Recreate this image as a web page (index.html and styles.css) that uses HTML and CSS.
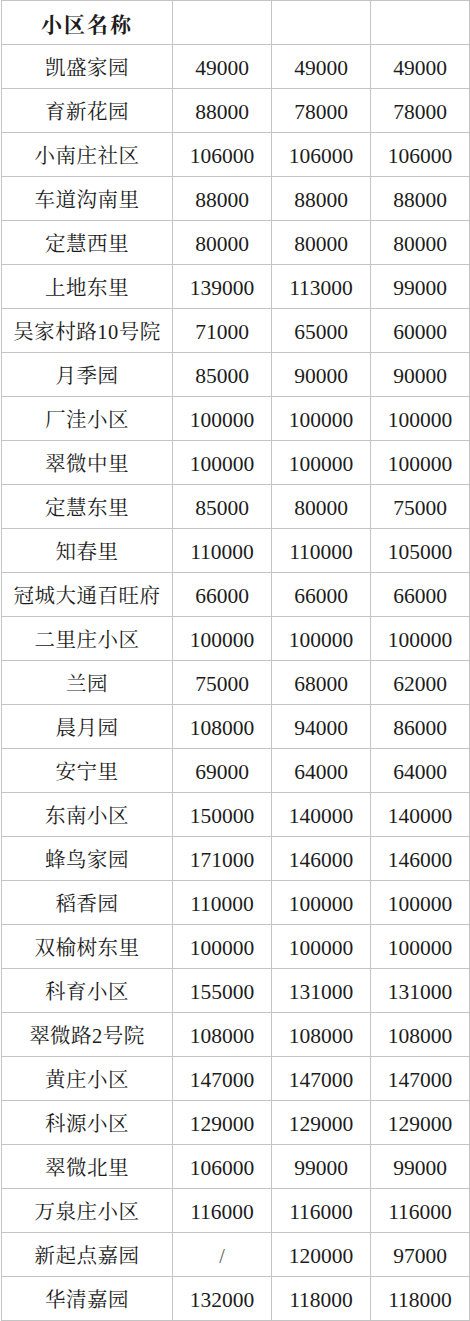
FILE: index.html
```html
<!DOCTYPE html>
<html lang="zh-CN">
<head>
<meta charset="utf-8">
<title>小区名称</title>
<link rel="stylesheet" href="styles.css">
</head>
<body>
<table class="price-table">
<colgroup>
<col class="c-name"><col class="c-num"><col class="c-num"><col class="c-num3">
</colgroup>
<tbody>
<tr class="head"><td class="name">小区名称</td><td></td><td></td><td></td></tr>
<tr><td class="name">凯盛家园</td><td>49000</td><td>49000</td><td>49000</td></tr>
<tr><td class="name">育新花园</td><td>88000</td><td>78000</td><td>78000</td></tr>
<tr><td class="name">小南庄社区</td><td>106000</td><td>106000</td><td>106000</td></tr>
<tr><td class="name">车道沟南里</td><td>88000</td><td>88000</td><td>88000</td></tr>
<tr><td class="name">定慧西里</td><td>80000</td><td>80000</td><td>80000</td></tr>
<tr><td class="name">上地东里</td><td>139000</td><td>113000</td><td>99000</td></tr>
<tr><td class="name">吴家村路10号院</td><td>71000</td><td>65000</td><td>60000</td></tr>
<tr><td class="name">月季园</td><td>85000</td><td>90000</td><td>90000</td></tr>
<tr><td class="name">厂洼小区</td><td>100000</td><td>100000</td><td>100000</td></tr>
<tr><td class="name">翠微中里</td><td>100000</td><td>100000</td><td>100000</td></tr>
<tr><td class="name">定慧东里</td><td>85000</td><td>80000</td><td>75000</td></tr>
<tr><td class="name">知春里</td><td>110000</td><td>110000</td><td>105000</td></tr>
<tr><td class="name">冠城大通百旺府</td><td>66000</td><td>66000</td><td>66000</td></tr>
<tr><td class="name">二里庄小区</td><td>100000</td><td>100000</td><td>100000</td></tr>
<tr><td class="name">兰园</td><td>75000</td><td>68000</td><td>62000</td></tr>
<tr><td class="name">晨月园</td><td>108000</td><td>94000</td><td>86000</td></tr>
<tr><td class="name">安宁里</td><td>69000</td><td>64000</td><td>64000</td></tr>
<tr><td class="name">东南小区</td><td>150000</td><td>140000</td><td>140000</td></tr>
<tr><td class="name">蜂鸟家园</td><td>171000</td><td>146000</td><td>146000</td></tr>
<tr><td class="name">稻香园</td><td>110000</td><td>100000</td><td>100000</td></tr>
<tr><td class="name">双榆树东里</td><td>100000</td><td>100000</td><td>100000</td></tr>
<tr><td class="name">科育小区</td><td>155000</td><td>131000</td><td>131000</td></tr>
<tr><td class="name">翠微路2号院</td><td>108000</td><td>108000</td><td>108000</td></tr>
<tr><td class="name">黄庄小区</td><td>147000</td><td>147000</td><td>147000</td></tr>
<tr><td class="name">科源小区</td><td>129000</td><td>129000</td><td>129000</td></tr>
<tr><td class="name">翠微北里</td><td>106000</td><td>99000</td><td>99000</td></tr>
<tr><td class="name">万泉庄小区</td><td>116000</td><td>116000</td><td>116000</td></tr>
<tr><td class="name">新起点嘉园</td><td class="slash">/</td><td>120000</td><td>97000</td></tr>
<tr><td class="name">华清嘉园</td><td>132000</td><td>118000</td><td>118000</td></tr>
</tbody>
</table>
</body>
</html>
```
FILE: styles.css
```css
html, body {
  margin: 0;
  padding: 0;
  background: #ffffff;
}

body {
  padding-left: 1px;
  font-family: "Liberation Serif", "Noto Serif CJK SC", "Noto Sans CJK SC", serif;
  color: #1c1c1c;
}

.price-table {
  border-collapse: collapse;
  table-layout: fixed;
  width: 468px;
}

.c-name { width: 171px; }
.c-num { width: 99px; }
.c-num3 { width: 99px; }

.price-table td {
  border: 1px solid #c4c4c4;
  height: 44px;
  padding: 0;
  text-align: center;
  vertical-align: middle;
  font-size: 21.5px;
  line-height: 24px;
  white-space: nowrap;
  padding-top: 3px;
  box-sizing: border-box;
}

.price-table .name {
  font-size: 20.5px;
  letter-spacing: 0.5px;
}

.price-table .head td {
  padding-top: 4px;
}

.price-table .head .name {
  font-weight: bold;
  font-size: 21px;
  letter-spacing: 2px;
}

.price-table .slash {
  color: #555;
  font-size: 20px;
}
```
